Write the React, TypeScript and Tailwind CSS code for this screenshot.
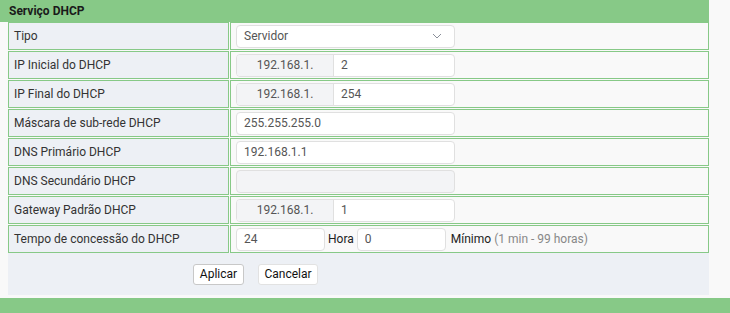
const font = { fontFamily: "Roboto, 'Liberation Sans', sans-serif" }

function Label({ children }: { children: React.ReactNode }) {
  return (
    <div className="h-[28px] border border-[#87c987] bg-[#edf0f5] pl-[5px] flex items-center text-[12px] text-[#333]">
      {children}
    </div>
  )
}

function Cell({ children }: { children?: React.ReactNode }) {
  return (
    <div className="h-[28px] border border-[#87c987] bg-[#f9f9f9] pl-[5px] flex items-center text-[12px]">
      {children}
    </div>
  )
}

function TextBox({ value, w = "w-[219px]", disabled = false }: { value: string; w?: string; disabled?: boolean }) {
  return (
    <input
      readOnly
      defaultValue={value}
      className={`${w} h-[23px] rounded-[4px] border border-[#e0e0e0] ${disabled ? "bg-[#f3f4f6]" : "bg-white"} pl-[7px] text-[12px] text-[#555] outline-none`}
    />
  )
}

function IpBox({ last }: { last: string }) {
  return (
    <div className="w-[219px] h-[23px] rounded-[4px] border border-[#e0e0e0] bg-white flex overflow-hidden text-[12px] text-[#555]">
      <div className="w-[97px] bg-[#f3f4f6] border-r border-[#e0e0e0] flex items-center justify-center">192.168.1.</div>
      <div className="flex-1 flex items-center pl-[7px]">{last}</div>
    </div>
  )
}

export default function App() {
  return (
    <div style={font} className="w-[730px] h-[313px] bg-[#f9f9f9] flex flex-col overflow-hidden">
      <div className="w-[709px] h-[22px] bg-[#87c987] pl-[9px] flex items-center text-[12px] font-bold text-[#1a1a1a]">
        Serviço DHCP
      </div>

      <div className="pl-[8px]">
        <div className="w-[701px] grid grid-cols-[221px_479px] gap-px">
          <Label>Tipo</Label>
          <Cell>
            <div className="w-[219px] h-[23px] rounded-[4px] border border-[#e0e0e0] bg-white flex items-center justify-between pl-[7px] pr-[12px] text-[12px] text-[#555]">
              <span>Servidor</span>
              <svg width="10" height="6" viewBox="0 0 10 6" fill="none">
                <polyline points="1,1 5,5 9,1" stroke="#8a8f99" strokeWidth="1" />
              </svg>
            </div>
          </Cell>

          <Label>IP Inicial do DHCP</Label>
          <Cell><IpBox last="2" /></Cell>

          <Label>IP Final do DHCP</Label>
          <Cell><IpBox last="254" /></Cell>

          <Label>Máscara de sub-rede DHCP</Label>
          <Cell><TextBox value="255.255.255.0" /></Cell>

          <Label>DNS Primário DHCP</Label>
          <Cell><TextBox value="192.168.1.1" /></Cell>

          <Label>DNS Secundário DHCP</Label>
          <Cell><TextBox value="" disabled /></Cell>

          <Label>Gateway Padrão DHCP</Label>
          <Cell><IpBox last="1" /></Cell>

          <Label>Tempo de concessão do DHCP</Label>
          <Cell>
            <TextBox value="24" w="w-[89px]" />
            <span className="ml-[3px] text-[#222]">Hora</span>
            <span className="ml-[3px]"><TextBox value="0" w="w-[89px]" /></span>
            <span className="ml-[5px] text-[#222]">Mínimo</span>
            <span className="ml-[3px] text-[#888]">(1 min - 99 horas)</span>
          </Cell>
        </div>

        <div className="w-[701px] h-[42px] bg-[#edf0f5] flex items-center pl-[185px] gap-[14px]">
          <button className="w-[51px] h-[21px] rounded-[3px] border border-[#c8c8c8] bg-white text-[12px] text-[#111]">Aplicar</button>
          <button className="w-[60px] h-[21px] rounded-[3px] border border-[#e2e2e2] bg-white text-[12px] text-[#111]">Cancelar</button>
        </div>
      </div>

      <div className="flex-1" />
      <div className="h-[15px] bg-[#87c987]" />
    </div>
  )
}
